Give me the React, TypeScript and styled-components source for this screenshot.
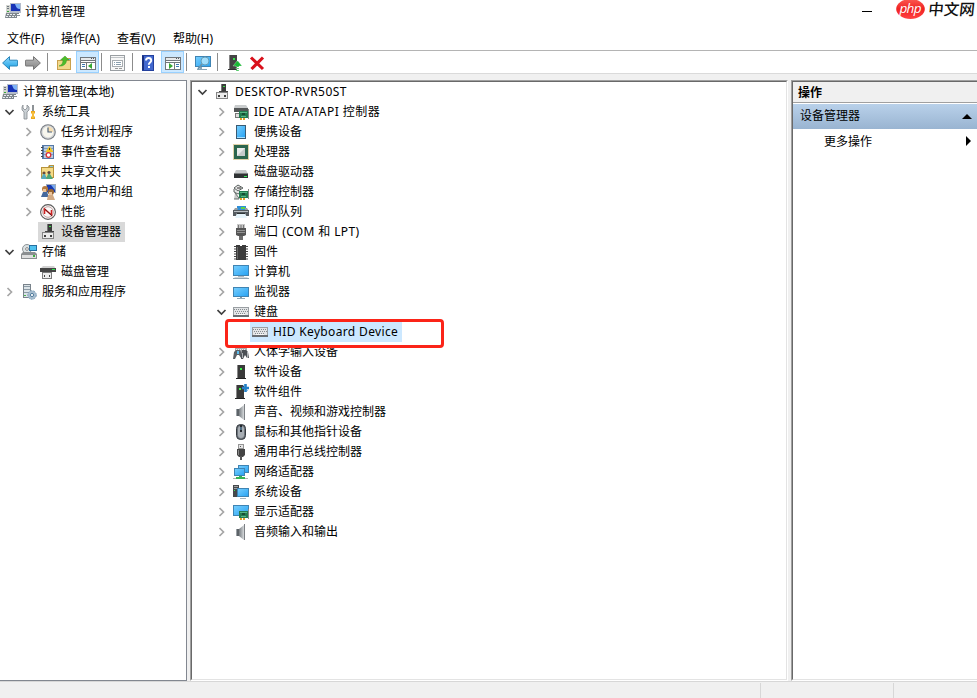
import React from "react";
import styled, { createGlobalStyle, css } from "styled-components";

const GlobalStyle = createGlobalStyle`
  html, body { margin: 0; padding: 0; background: #fff; overflow: hidden; }
  body { font-family: "Noto Sans", "Noto Sans CJK SC", sans-serif; font-size: 12px; color: #000; }
  *, *::before, *::after { box-sizing: border-box; }
`;

/* ---------- icon drawings, all on a 16 x 16 grid ---------- */

const Tower = ({ x = 0 }: { x?: number }) => (
  <g transform={`translate(${x} 0)`}>
    <path d="M4 1h8v13H4z" fill="#3a3a3a" />
    <path d="M4 1h1v13H4z" fill="#8a8a8a" />
    <path d="M3 14h10v1H3z" fill="#222" />
    <path d="M7 4h2v2H7z" fill="#3df04a" />
  </g>
);

const Screen = ({ x, y, w, h }: { x: number; y: number; w: number; h: number }) => (
  <g>
    <rect x={x} y={y} width={w} height={h} fill="#3f84b3" />
    <rect x={x + 1} y={y + 1} width={w - 2} height={h - 2} fill="url(#screenFill)" />
  </g>
);

const Card = () => (
  <g>
    <path d="M6 7h9v7H6z" fill="#237c50" />
    <path d="M7 8h7v1H7zM8 12h5v1H8z" fill="#58b586" />
    <path d="M9 9h3v2H9z" fill="#174c34" />
    <path d="M7 14h2v2H7zM10 14h2v2h-2z" fill="#e0a02c" />
    <path d="M15 5h1v10h-1z" fill="#888" />
  </g>
);

const Keys = () => (
  <g>
    <path d="M0 3h16v10H0z" fill="#9a9fa3" />
    <path d="M1 4h14v7H1z" fill="#e2e4e6" />
    <path d="M1 5.5h14M2 7.5h14M3 9.5h10" stroke="#858b90" strokeDasharray="1 1" />
    <path d="M0 11h16v2H0z" fill="#696e73" />
    <path d="M4 10h8v1H4z" fill="#f7f7f7" />
  </g>
);

const DeviceBox = () => (
  <g>
    <path d="M7 0h5v8H7z" fill="#3b3b3b" />
    <path d="M7 0h1v7H7z" fill="#777" />
    <path d="M9 2h2v1H9z" fill="#38e045" />
    <path d="M5 7h9v1H5z" fill="#444" />
    <path d="M2 8h12v7H2z" fill="#858585" />
    <path d="M3 9h10v5H3z" fill="#ebebeb" />
    <path d="M4 11h2v2H4zM10 11h2v2h-2z" fill="#3e3e3e" />
  </g>
);

const Speaker = () => (
  <g>
    <path d="M3 5h3v7H3z" fill="#5d6368" />
    <path d="M6 5l5-4v15l-5-4z" fill="url(#metal)" />
    <path d="M11 0h1v16h-1z" fill="#7c8084" />
    <path d="M3 5h1v7H3z" fill="#9ba1a6" />
  </g>
);

const OldComputer = () => (
  <g>
    <path d="M5 0h11v10H5z" fill="#b4bccb" />
    <path d="M6 1h9v7H6z" fill="#1732b6" />
    <path d="M10 1h5v5c-3 0-4-2-5-5z" fill="#7eb2f5" />
    <path d="M1 2h4v8H1z" fill="#d3d5d0" />
    <path d="M2 3h2v1H2zM2 5h2v1H2z" fill="#6f7780" />
    <path d="M8 10h6v1H8z" fill="#777f88" />
    <path d="M1 10h11v5H0z" fill="#7f878d" />
    <path d="M2 11.5h9M1 13.5h10" stroke="#e8edf0" strokeDasharray="2 1" />
    <path d="M2 8h2v1H2z" fill="#38a83d" />
    <path d="M12 12h3v1h-3z" fill="#8c949b" />
  </g>
);

const Pane = ({ left }: { left: boolean }) => (
  <g>
    <path d="M0 2h16v13H0z" fill="#72777c" />
    <path d="M1 3h14v2H1z" fill="#e7e9eb" />
    <path d="M11 3h1v1h-1zM13 3h1v1h-1z" fill="#515b65" />
    <path d="M1 6h14v1H1zM1 8h14v6H1z" fill="#fff" />
    {left ? (
      <g>
        <path d="M6 8h1v6H6z" fill="#777" />
        <path d="M2 9.5h3M2 11.5h3" stroke="#3d77b0" />
        <path d="M12 8v6l-4-3z" fill="#36a832" />
      </g>
    ) : (
      <g>
        <path d="M9 8h1v6H9z" fill="#777" />
        <path d="M11 9.5h3M11 11.5h3" stroke="#3d77b0" />
        <path d="M4 8v6l4-3z" fill="#36a832" />
      </g>
    )}
  </g>
);

const drawings = {
  computer: <OldComputer />,
  tools: (
    <g>
      <path d="M2 1v3l2 2 2-2V1l2 2v3L6 8v7H3V8L1 6V3z" fill="#c9cfd3" stroke="#858b90" strokeWidth=".8" />
      <path d="M11 1h2v7h-2z" fill="#8d9296" />
      <path d="M10 7h4v2l-1 1v2l1 1v2h-4v-2l1-1v-2l-1-1z" fill="#eda91d" />
      <path d="M12 8v6" stroke="#ffd35e" />
    </g>
  ),
  clock: (
    <g>
      <circle cx="8" cy="8" r="7.8" fill="#777c82" />
      <circle cx="8" cy="8" r="6.7" fill="#d5d7d9" />
      <circle cx="8" cy="8" r="5.4" fill="#f8f7ee" />
      <path d="M8 2.6a5.4 5.4 0 0 1 5.4 5.4H8z" fill="#f4ddb3" />
      <path d="M8 3.5V8h4" fill="none" stroke="#4e637a" strokeWidth="1.2" />
    </g>
  ),
  events: (
    <g>
      <path d="M2 1h12v14H2z" fill="#5579a6" />
      <path d="M4 2h9v12H4z" fill="#b9cbe0" />
      <path d="M4 4.5h9M4 7.5h9M4 10.5h9" stroke="#7f9cbe" />
      <path d="M1 3h2v1H1zM1 6h2v1H1zM1 9h2v1H1zM1 12h2v1H1z" fill="#444" />
      <path d="M9.5 2l4 6h-8z" fill="#f3c51e" />
      <path d="M9 4h1v2H9z" fill="#604900" />
      <circle cx="8.5" cy="11" r="2.3" fill="#fff" stroke="#dc3333" strokeWidth="1.3" />
    </g>
  ),
  shared: (
    <g>
      <path d="M1 3h7l1-2h5v13H1z" fill="#b6923b" />
      <path d="M2 4h11v9H2z" fill="#f5db86" />
      <path d="M10 2h3v1h-3z" fill="#7ec7e5" />
      <circle cx="4" cy="9" r="1.6" fill="#6a4d3b" />
      <circle cx="9" cy="8.5" r="1.6" fill="#574742" />
      <path d="M1 15l2-5h2l2 5z" fill="#55a9bd" />
      <path d="M6 15l2-5h2l3 5z" fill="#4fa777" />
    </g>
  ),
  users: (
    <g>
      <path d="M6 0h10v9H6z" fill="#9facbc" />
      <path d="M7 1h8v7H7z" fill="#183aaf" />
      <path d="M11 1h4v5z" fill="#78a9ee" />
      <circle cx="5" cy="5" r="3" fill="#b47a3e" />
      <circle cx="11" cy="8" r="3" fill="#996632" />
      <path d="M1 13l2-5h4l2 5z" fill="#45699d" />
      <path d="M7 16l1-5h5l2 5z" fill="#d1aa85" />
      <path d="M3 5h3v3H3zM9 8h3v3H9z" fill="#ecc49b" />
    </g>
  ),
  performance: (
    <g>
      <circle cx="8" cy="8" r="7.4" fill="#fafafa" stroke="#5b5b5b" strokeWidth="1.1" />
      <circle cx="8" cy="8" r="5.3" fill="none" stroke="#c5a4a4" />
      <path d="M4.5 10V5l7 6V6" fill="none" stroke="#cc2222" strokeWidth="1.6" />
      <path d="M5 5l7 7" stroke="#6b2020" />
    </g>
  ),
  device: <DeviceBox />,
  storage: (
    <g>
      <circle cx="6" cy="5" r="4.5" fill="#dce2e3" stroke="#8b9295" />
      <circle cx="6" cy="5" r="1.4" fill="#fff" stroke="#898989" />
      <path d="M8 1h8v6H8z" fill="#276f9f" />
      <path d="M9 2h6v4H9z" fill="#4fc1ee" />
      <path d="M0 10l2-2h12l2 2v5H0z" fill="#8b8f91" />
      <path d="M1 11h14v3H1z" fill="#dedfdf" />
      <path d="M12 11h2v2h-2z" fill="#3caf3f" />
    </g>
  ),
  disk: (
    <g>
      <path d="M3 2h11l2 3v2H0V5z" fill="#d2d2d2" />
      <path d="M0 4h16v4H0z" fill="#454545" />
      <path d="M12 5h3v1h-3z" fill="#31e450" />
      <path d="M2 8h10v7H2z" fill="#7c7c7c" />
      <path d="M3 9h8v5H3z" fill="#eee" />
      <path d="M4 11h1v2H4zM9 11h1v2H9z" fill="#444" />
    </g>
  ),
  services: (
    <g>
      <path d="M2 0h8v14H2z" fill="#79838b" />
      <path d="M3 1h6v12H3z" fill="#dce4e8" />
      <path d="M3 2.5h6M3 5.5h6M3 8.5h6" stroke="#8c9ba6" />
      <path d="M3 11h2v1H3z" fill="#4ab64d" />
      <circle cx="11" cy="11" r="4.3" fill="#a7bdcf" stroke="#7fa0b9" strokeDasharray="2 1" />
      <circle cx="11" cy="11" r="1.6" fill="#fff" stroke="#527d9e" />
    </g>
  ),
  ide: (
    <g>
      <path d="M2 1h11l2 3H1z" fill="#c9cccd" />
      <path d="M1 4h14v4H1z" fill="#535657" />
      <path d="M2 9h5v5H2z" fill="#777" />
      <path d="M3 10h3v3H3z" fill="#ddd" />
      <Card />
    </g>
  ),
  portable: (
    <g>
      <path d="M3 1h10v14H3z" fill="#395a73" />
      <path d="M4 2h8v11H4z" fill="url(#screenFill)" />
      <path d="M4 13h8v1H4z" fill="#a4dfff" />
    </g>
  ),
  cpu: (
    <g>
      <rect x=".5" y=".5" width="15" height="15" fill="none" stroke="#c3a755" strokeDasharray="1 1" />
      <path d="M1 1h14v14H1z" fill="#2c664e" />
      <path d="M4 4h8v8H4z" fill="#c6cbcb" />
      <path d="M4 4h8l-8 8z" fill="#e9eceb" />
    </g>
  ),
  drive: (
    <g>
      <path d="M3 6h10l2 4H1z" fill="#c6c9ca" />
      <path d="M1 9h14v5H1z" fill="#303334" />
      <path d="M1 9h14v1H1z" fill="#7d8081" />
      <path d="M11 12h3v1h-3z" fill="#35ec58" />
    </g>
  ),
  controller: (
    <g>
      <path d="M1 4l4-3 5 3-5 3zM1 5v3l4 2 2-1" fill="#e5e5e5" stroke="#59605e" />
      <path d="M4 4h4" stroke="#333" />
      <path d="M2 9l4 5v1H1" fill="#c8c8c8" stroke="#64706a" />
      <Card />
    </g>
  ),
  printer: (
    <g>
      <path d="M4 2h9v4H4z" fill="#2f8fd8" />
      <path d="M8 3h4v2H8z" fill="#60d345" />
      <path d="M2 4h3L4 7H0zM12 4h2l2 3h-4z" fill="#999d9f" />
      <path d="M0 6h16v6H0z" fill="#555b60" />
      <path d="M1 7h14v1H1z" fill="#b8bec2" />
      <path d="M4 9h8l2 5H2z" fill="#e6f4fb" />
      <path d="M4 9h8v1H4z" fill="#2e3436" />
    </g>
  ),
  port: (
    <g>
      <path d="M4 0h8v4H4z" fill="#c7c7c7" />
      <path d="M5.5 1v3M8 1v3M10.5 1v3" stroke="#777" />
      <path d="M3 4h10v7l-2 1H5l-2-1z" fill="#555" />
      <path d="M4 6.5h8M4 8.5h8" stroke="#929292" />
      <path d="M6 12h4v4H6z" fill="#6e6e6e" />
    </g>
  ),
  firmware: (
    <g>
      <path d="M1 2.5h14M1 5h14M1 7.5h14M1 10h14M1 12.5h14M1 15h14" stroke="#444" strokeWidth="1.2" />
      <path d="M3 1h4v1h2V1h4v15H3z" fill="#3b3b3b" />
      <path d="M4 3h1v12H4z" fill="#666" />
    </g>
  ),
  pc: (
    <g>
      <Screen x={0} y={1} w={16} h={11} />
      <path d="M5 12h6v1H5z" fill="#b2b9bd" />
      <path d="M2 13h12l2 2H0z" fill="#d0d8dd" />
      <path d="M0 14h16v1H0z" fill="#93a5b1" />
    </g>
  ),
  monitor: (
    <g>
      <Screen x={0} y={3} w={16} h={10} />
      <path d="M7 13h2v1H7z" fill="#889aa5" />
      <path d="M4 14h8v1H4z" fill="#91a9b7" />
    </g>
  ),
  keyboard: <Keys />,
  hid: (
    <g>
      <path d="M2 2h12v7H2z" fill="#a7abad" />
      <path d="M3 3.5h10M3 5.5h10" stroke="#eee" strokeDasharray="1 1" />
      <path d="M1 8l2-2h4l2 4 1 4H8l-2-3H4l-2 4H0z" fill="#5a5f65" />
      <path d="M9 6h4l2 2 1 6h-2l-2-3-2 4H8z" fill="#4b5055" />
      <path d="M4 7h2v3H4z" fill="#5bbced" />
      <path d="M9 9h1v5H9zM14 8h1v6h-1z" fill="#aeb2b5" />
    </g>
  ),
  software: <Tower />,
  component: (
    <g>
      <Tower x={-1} />
      <path d="M12.5 0v8M9 4h7" stroke="#2480c7" strokeWidth="2.6" />
      <path d="M10 1h1v1h-1zM14 6h1v1h-1z" fill="#8fc4e7" />
    </g>
  ),
  speaker: <Speaker />,
  mouse: (
    <g>
      <rect x="3.5" y=".5" width="9" height="15" rx="4" fill="#6b7279" stroke="#353a40" />
      <rect x="5" y="2" width="6" height="12" rx="3" fill="#a7adb3" />
      <path d="M7 1h2v7H7z" fill="#25292e" />
      <path d="M8 3v3" stroke="#7eb5dd" />
    </g>
  ),
  usb: (
    <g>
      <path d="M5 0h6v5H5z" fill="#959595" />
      <path d="M6 1h4v3H6z" fill="#e5e5e5" />
      <path d="M7 2h1v1H7z" fill="#555" />
      <path d="M4 5h8v6l-2 2H6l-2-2z" fill="#444" />
      <path d="M5 6h1v5H5z" fill="#888" />
      <path d="M7 12h2v4H7z" fill="#555" />
    </g>
  ),
  network: (
    <g>
      <Screen x={5} y={1} w={11} h={8} />
      <Screen x={1} y={4} w={11} h={8} />
      <path d="M6 12h3v1h3v2H3v-2h3z" fill="#35b354" />
      <path d="M0 14h3v1H0zM12 14h3v1h-3z" fill="#b0b8b2" />
    </g>
  ),
  system: (
    <g>
      <path d="M0 1h6v12H0z" fill="#45494c" />
      <path d="M1 2h4v1H1zM1 4h4v1H1z" fill="#9ca0a2" />
      <path d="M1 6h1v1H1z" fill="#38e652" />
      <Screen x={4} y={4} w={12} h={9} />
      <path d="M7 14h6v1H7z" fill="#a4b4be" />
    </g>
  ),
  display: (
    <g>
      <Screen x={0} y={1} w={16} h={11} />
      <Card />
    </g>
  ),
  back: (
    <path
      d="M.6 8l6.9-6.4v3.6H15q.6 0 .6.6v4.6q0 .6-.6.6H7.500v3.400z"
      fill="url(#blueArrow)"
      stroke="#2a86ba"
    />
  ),
  forward: (
    <path
      d="M15.400 8L8.500 1.600v3.600H1q-.6 0-.6.6v4.600q0 .6.6.6h7.500v3.400z"
      fill="url(#grayArrow)"
      stroke="#757575"
    />
  ),
  folderUp: (
    <g>
      <path d="M1 5h5l1-2h8v12H1z" fill="#c9a04c" />
      <path d="M2 6h12v8H2z" fill="#f3d98c" />
      <path d="M11 4h3v1h-3z" fill="#53b2e4" />
      <path d="M3 11c3-1 4-3 4-6H4.500L9 1l4 4h-2.500c0 4-3 6.500-7.500 6z" fill="#4ebc29" stroke="#3a9a2a" strokeWidth=".5" />
    </g>
  ),
  paneLeft: <Pane left />,
  paneRight: <Pane left={false} />,
  properties: (
    <g>
      <path d="M0 0h15v16H0z" fill="#999ea2" />
      <path d="M1 1h13v14H1z" fill="#f7f7f7" />
      <path d="M1 2h13v1H1z" fill="#c0c4c7" />
      <path d="M2 5h11v7H2z" fill="#a8adb1" />
      <path d="M3 6h9v5H3z" fill="#fff" />
      <path d="M4 7.500h1M6 7.500h5M4 9.500h1M6 9.500h5" stroke="#8a9fae" />
      <path d="M5 13h3v1H5zM9 13h3v1H9z" fill="#999" />
    </g>
  ),
  help: (
    <g>
      <path d="M2 0h12v16H2z" fill="#24419d" />
      <path d="M4 1h9v14H4z" fill="#4268ce" />
      <path d="M2 1h2v14H2z" fill="#1a3180" />
      <path d="M6 5.600C6 2 11.200 2.200 11.200 5.400c0 2-2.400 2.200-2.400 4.400" fill="none" stroke="#fff" strokeWidth="1.9" />
      <path d="M8 11h2v2H8z" fill="#fff" />
    </g>
  ),
  scan: (
    <g>
      <Screen x={0} y={1} w={16} h={11} />
      <path d="M5 12h2v2h5v1H2v-1h3z" fill="#8aa5b7" />
      <path d="M7 9l-4 5" stroke="#6794ae" strokeWidth="2" />
      <circle cx="10" cy="6" r="4" fill="#bde9fb" fillOpacity=".75" stroke="#649db9" />
    </g>
  ),
  update: (
    <g>
      <path d="M2 0h8v14H2z" fill="#444" />
      <path d="M2 0h1v14H2z" fill="#858585" />
      <path d="M1 14h9v1H1z" fill="#333" />
      <path d="M6 3h2v2H6z" fill="#37e24c" />
      <path d="M10 6h1l4 5h-3v1H9v-1H6zM9 13h3v1H9zM9 15h3v1H9z" fill="#1bb836" stroke="#fff" strokeWidth=".3" />
    </g>
  ),
  remove: <path d="M2 2.500l12 11.500M14 2.500L2.500 14" fill="none" stroke="#d9101b" strokeWidth="3.1" />,
};

type IconName = keyof typeof drawings;

const IconSvg = styled.svg`
  display: block;
  width: 16px;
  height: 16px;
  flex: none;
`;

const Icon = ({ name }: { name: IconName }) => (
  <IconSvg viewBox="0 0 16 16">{drawings[name]}</IconSvg>
);

const GradientDefs = styled.svg`
  position: absolute;
  width: 0;
  height: 0;
`;

/* ---------- window frame ---------- */

const Window = styled.div`
  width: 977px;
  height: 698px;
  display: flex;
  flex-direction: column;
  background: #f0f0f0;
  overflow: hidden;
  white-space: nowrap;
`;

const TitleBar = styled.header`
  height: 25px;
  flex: none;
  display: flex;
  align-items: flex-start;
  padding: 3px 0 0 5px;
  background: #fff;
`;

const Title = styled.span`
  margin-left: 4px;
  line-height: 17px;
  flex: 1;
`;

const Minimize = styled.div`
  width: 10px;
  height: 1px;
  margin: 8px 24px 0 0;
  background: #000;
`;

const Logo = styled.svg`
  display: block;
  width: 81px;
  height: 22px;
  margin-top: -3px;
`;

const MenuBar = styled.nav`
  height: 25px;
  flex: none;
  display: flex;
  align-items: center;
  padding: 2px 0 0 7px;
  background: #fff;
`;

const MenuItem = styled.span`
  width: 56px;
  line-height: 18px;
  &:first-child { width: 54px; }
`;

const Toolbar = styled.div`
  height: 24px;
  flex: none;
  display: flex;
  align-items: center;
  border-top: 1px solid #b4b4b4;
  border-bottom: 1px solid #dadada;
  background: #fff;
`;

const Tool = styled.div<{ $gap: number; $active?: boolean }>`
  height: 22px;
  padding-top: 4px;
  margin-left: ${(p) => p.$gap}px;
  ${(p) =>
    p.$active &&
    css`
      width: 23px;
      padding: 3px 3px 0;
      background: #cce8ff;
      border: 1px solid #99d1ff;
    `}
`;

const Separator = styled.div<{ $gap: number }>`
  width: 1px;
  height: 18px;
  margin-left: ${(p) => p.$gap}px;
  background: #8c8c8c;
`;

const Workspace = styled.main`
  height: 601px;
  margin-top: 6px;
  flex: none;
  display: grid;
  grid-template-columns: 187px 598px 186px;
  column-gap: 3px;
`;

const ScopePane = styled.section`
  background: #fff;
  border: solid #828790;
  border-width: 1px 1px 1px 0;
  padding-top: 1px;
`;

const SunkenPane = styled.section<{ $open?: boolean }>`
  background: #fff;
  border: 1px solid;
  border-color: #a0a0a0 #fff #fff #a0a0a0;
  border-right-width: ${(p) => (p.$open ? 0 : 1)}px;
`;

const SunkenInner = styled.div<{ $open?: boolean }>`
  height: 599px;
  border: 1px solid;
  border-color: #696969 #e3e3e3 #e3e3e3 #696969;
  border-right-width: ${(p) => (p.$open ? 0 : 1)}px;
`;

/* ---------- trees ---------- */

const TreeRow = styled.div<{ $indent: number }>`
  position: relative;
  height: 20px;
  display: flex;
  align-items: center;
  padding-left: ${(p) => p.$indent}px;
`;

const ChevronSvg = styled.svg`
  width: 10px;
  height: 10px;
  flex: none;
  margin-right: 4px;
`;

const Label = styled.span<{ $fill?: string }>`
  height: 20px;
  display: flex;
  align-items: center;
  gap: 5px;
  line-height: 18px;
  padding: 0 4px 0 2px;
  background: ${(p) => p.$fill || "transparent"};
`;

const Caption = styled.span<{ $spacing: number }>`
  letter-spacing: ${(p) => p.$spacing}px;
`;

const Highlight = styled.div`
  position: absolute;
  z-index: 1;
  left: 33px;
  top: -3px;
  width: 219px;
  height: 29px;
  border: 3px solid #fb2418;
  border-radius: 4px;
`;

type Toggle = "open" | "closed";

const Chevron = ({ state }: { state: Toggle }) => (
  <ChevronSvg viewBox="0 0 10 10">
    {state === "open" ? (
      <path d="M.5 3l4 4 4-4" fill="none" stroke="#404040" strokeWidth="1.7" />
    ) : (
      <path d="M2.500 1l4 4-4 4" fill="none" stroke="#a6a6a6" strokeWidth="1.7" />
    )}
  </ChevronSvg>
);

interface NodeProps {
  indent: number;
  icon: IconName;
  text: string;
  toggle?: Toggle;
  fill?: string;
  spacing?: number;
  children?: React.ReactNode;
}

const TreeNode = ({ indent, icon, text, toggle, fill, spacing = 0, children }: NodeProps) => (
  <TreeRow $indent={toggle ? indent - 14 : indent}>
    {toggle && <Chevron state={toggle} />}
    <Label $fill={fill}>
      <Icon name={icon} />
      <Caption $spacing={spacing}>{text}</Caption>
    </Label>
    {children}
  </TreeRow>
);

const scopeNodes: NodeProps[] = [
  { indent: 0, icon: "computer", text: "计算机管理(本地)" },
  { indent: 19, icon: "tools", text: "系统工具", toggle: "open" },
  { indent: 38, icon: "clock", text: "任务计划程序", toggle: "closed" },
  { indent: 38, icon: "events", text: "事件查看器", toggle: "closed" },
  { indent: 38, icon: "shared", text: "共享文件夹", toggle: "closed" },
  { indent: 38, icon: "users", text: "本地用户和组", toggle: "closed" },
  { indent: 38, icon: "performance", text: "性能", toggle: "closed" },
  { indent: 38, icon: "device", text: "设备管理器", fill: "#d9d9d9" },
  { indent: 19, icon: "storage", text: "存储", toggle: "open" },
  { indent: 38, icon: "disk", text: "磁盘管理" },
  { indent: 19, icon: "services", text: "服务和应用程序", toggle: "closed" },
];

interface Category {
  icon: IconName;
  text: string;
  spacing?: number;
}

const categoriesBefore: Category[] = [
  { icon: "ide", text: "IDE ATA/ATAPI 控制器", spacing: 0.47 },
  { icon: "portable", text: "便携设备" },
  { icon: "cpu", text: "处理器" },
  { icon: "drive", text: "磁盘驱动器" },
  { icon: "controller", text: "存储控制器" },
  { icon: "printer", text: "打印队列" },
  { icon: "port", text: "端口 (COM 和 LPT)", spacing: 0.36 },
  { icon: "firmware", text: "固件" },
  { icon: "pc", text: "计算机" },
  { icon: "monitor", text: "监视器" },
];

const categoriesAfter: Category[] = [
  { icon: "hid", text: "人体学输入设备" },
  { icon: "software", text: "软件设备" },
  { icon: "component", text: "软件组件" },
  { icon: "speaker", text: "声音、视频和游戏控制器" },
  { icon: "mouse", text: "鼠标和其他指针设备" },
  { icon: "usb", text: "通用串行总线控制器" },
  { icon: "network", text: "网络适配器" },
  { icon: "system", text: "系统设备" },
  { icon: "display", text: "显示适配器" },
  { icon: "speaker", text: "音频输入和输出" },
];

/* ---------- actions pane ---------- */

const ActionsHeader = styled.div`
  height: 21px;
  padding-left: 5px;
  line-height: 21px;
  font-weight: 700;
  background: #f0f0f0;
  border-bottom: 1px solid #a0a0a0;
`;

const ActionsGroup = styled.div`
  height: 25px;
  margin-top: 1px;
  padding: 0 5px 0 7px;
  display: flex;
  align-items: center;
  justify-content: space-between;
  background: linear-gradient(#b9d1ea, #99b4d1);
`;

const GroupTitle = styled.span`
  line-height: 18px;
  margin-bottom: 1px;
`;

const ActionLink = styled.div`
  height: 23px;
  padding: 0 6px 0 31px;
  display: flex;
  align-items: center;
  justify-content: space-between;
`;

const UpArrow = styled.i`
  border: solid transparent;
  border-width: 0 5px 5px;
  border-bottom-color: #000;
`;

const RightArrow = styled.i`
  border: solid transparent;
  border-width: 5px 0 5px 5px;
  border-left-color: #000;
`;

const StatusBar = styled.footer`
  flex: 1;
  display: grid;
  grid-template-columns: 761px 133px 1fr;
  border-top: 1px solid #d7d7d7;
  background: #f0f0f0;
`;

const StatusCell = styled.div`
  margin-top: 1px;
  border-right: 1px solid #d7d7d7;
  &:last-child { border-right: 0; }
`;

export default function App() {
  return (
    <>
      <GlobalStyle />
      <GradientDefs aria-hidden>
        <defs>
          <linearGradient id="screenFill" x1="0" y1="0" x2="1" y2="1">
            <stop offset="0" stopColor="#75cdfd" />
            <stop offset="1" stopColor="#2aa4f4" />
          </linearGradient>
          <linearGradient id="metal">
            <stop offset="0" stopColor="#777d82" />
            <stop offset="1" stopColor="#d6d9db" />
          </linearGradient>
          <linearGradient id="blueArrow" x1="0" y1="0" x2="0" y2="1">
            <stop offset="0" stopColor="#91d9ff" />
            <stop offset="1" stopColor="#189fe2" />
          </linearGradient>
          <linearGradient id="grayArrow" x1="0" y1="0" x2="0" y2="1">
            <stop offset="0" stopColor="#bcbcbc" />
            <stop offset="1" stopColor="#858585" />
          </linearGradient>
          <linearGradient id="logoRed" x1="0" y1="0" x2="0" y2="1">
            <stop offset="0" stopColor="#fb5a52" />
            <stop offset=".5" stopColor="#f02222" />
            <stop offset="1" stopColor="#f44" />
          </linearGradient>
        </defs>
      </GradientDefs>
      <Window>
        <TitleBar>
          <Icon name="computer" />
          <Title>计算机管理</Title>
          <Minimize />
          <Logo viewBox="0 0 81 22">
            <ellipse cx="14.5" cy="9" rx="14.3" ry="10" fill="url(#logoRed)" />
            <text x="3.5" y="13" fill="#fff" fontFamily="Open Sans" fontStyle="italic" fontWeight="500" fontSize="13.5" textLength="22">php</text>
            <text x="32" y="15.500" fill="#111" fontFamily="Liberation Sans, Noto Sans CJK SC" fontWeight="500" fontSize="15.500" transform="skewX(-6) translate(1.500 0)" textLength="46.500">中文网</text>
          </Logo>
        </TitleBar>
        <MenuBar>
          <MenuItem>文件(F)</MenuItem>
          <MenuItem>操作(A)</MenuItem>
          <MenuItem>查看(V)</MenuItem>
          <MenuItem>帮助(H)</MenuItem>
        </MenuBar>
        <Toolbar>
          <Tool $gap={2}><Icon name="back" /></Tool>
          <Tool $gap={7}><Icon name="forward" /></Tool>
          <Separator $gap={6} />
          <Tool $gap={8}><Icon name="folderUp" /></Tool>
          <Tool $gap={4} $active><Icon name="paneLeft" /></Tool>
          <Separator $gap={2} />
          <Tool $gap={8}><Icon name="properties" /></Tool>
          <Separator $gap={6} />
          <Tool $gap={7}><Icon name="help" /></Tool>
          <Tool $gap={5} $active><Icon name="paneRight" /></Tool>
          <Separator $gap={2} />
          <Tool $gap={8}><Icon name="scan" /></Tool>
          <Separator $gap={6} />
          <Tool $gap={9}><Icon name="update" /></Tool>
          <Tool $gap={6}><Icon name="remove" /></Tool>
        </Toolbar>
        <Workspace>
          <ScopePane>
            {scopeNodes.map((node) => (
              <TreeNode key={node.text} {...node} />
            ))}
          </ScopePane>
          <SunkenPane>
            <SunkenInner>
              <TreeNode indent={20} icon="device" text="DESKTOP-RVR50ST" toggle="open" spacing={0.42} />
              {categoriesBefore.map((category) => (
                <TreeNode key={category.text} indent={39} toggle="closed" {...category} />
              ))}
              <TreeNode indent={39} icon="keyboard" text="键盘" toggle="open" />
              <TreeNode indent={58} icon="keyboard" text="HID Keyboard Device" fill="#cce8ff" spacing={0.35}>
                <Highlight />
              </TreeNode>
              {categoriesAfter.map((category) => (
                <TreeNode key={category.text} indent={39} toggle="closed" {...category} />
              ))}
            </SunkenInner>
          </SunkenPane>
          <SunkenPane $open>
            <SunkenInner $open>
              <ActionsHeader>操作</ActionsHeader>
              <ActionsGroup>
                <GroupTitle>设备管理器</GroupTitle>
                <UpArrow />
              </ActionsGroup>
              <ActionLink>
                更多操作
                <RightArrow />
              </ActionLink>
            </SunkenInner>
          </SunkenPane>
        </Workspace>
        <StatusBar>
          <StatusCell />
          <StatusCell />
          <StatusCell />
        </StatusBar>
      </Window>
    </>
  );
}
